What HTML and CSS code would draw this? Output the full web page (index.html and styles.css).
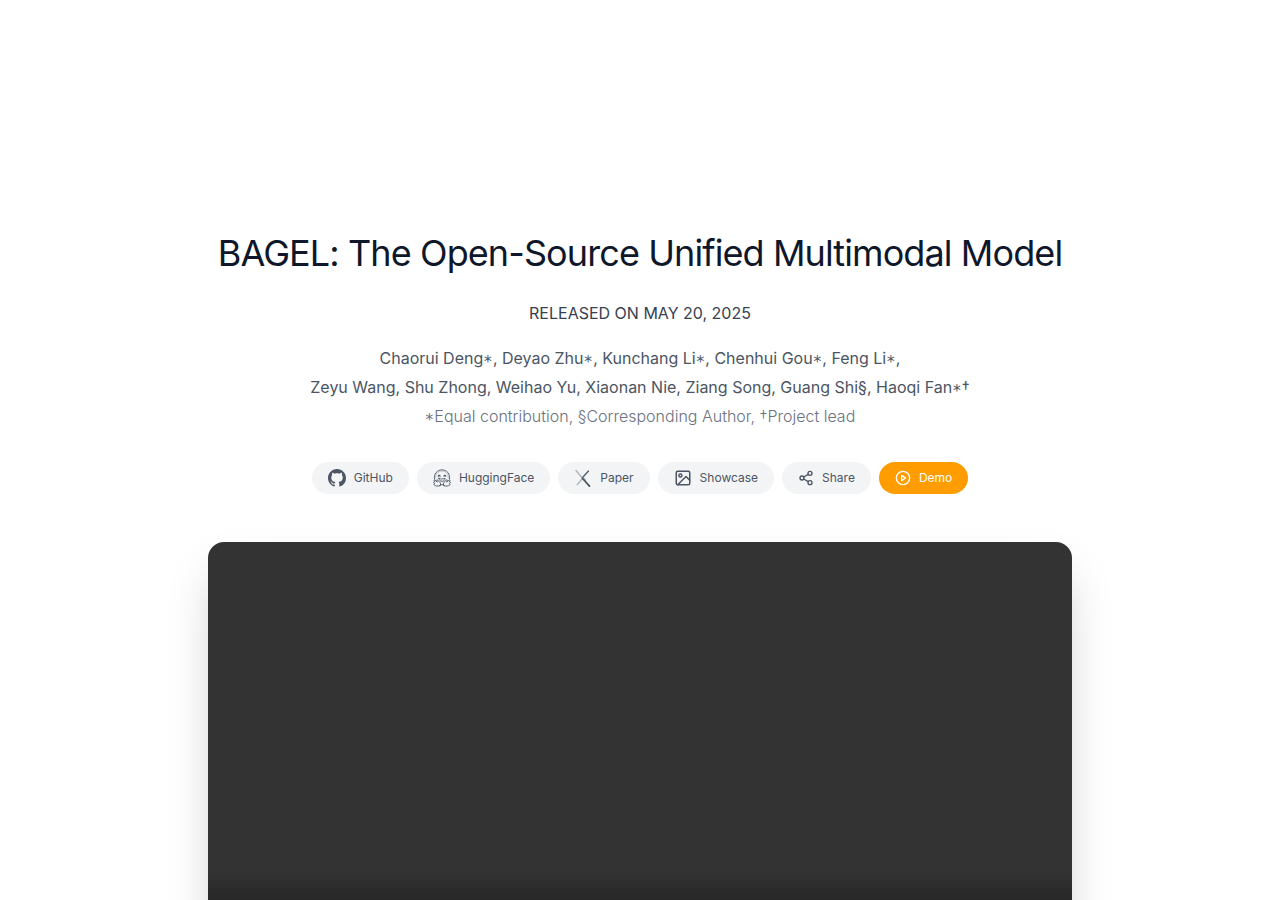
FILE: index.html
```html
<!DOCTYPE html>
<html lang="en">
<head>
    <meta charset="UTF-8">
    <meta name="viewport" content="width=device-width, initial-scale=1.0">
    <title>BAGEL: The Open-Source Unified Multimodal Model</title>
    <link rel="stylesheet" href="styles.css">
</head>
<body>
    <main class="hero">
        <h1>BAGEL: The Open-Source Unified Multimodal Model</h1>
        <p class="release">RELEASED ON MAY 20, 2025</p>

        <div class="authors">
            <p>Chaorui Deng∗, Deyao Zhu∗, Kunchang Li∗, Chenhui Gou∗, Feng Li∗,</p>
            <p>Zeyu Wang, Shu Zhong, Weihao Yu, Xiaonan Nie, Ziang Song, Guang Shi§, Haoqi Fan∗†</p>
            <p class="notes">∗Equal contribution, §Corresponding Author, †Project lead</p>
        </div>

        <nav class="links">
            <a class="pill" href="#github">
                <svg class="icon" viewBox="0 0 16 16" fill="currentColor" aria-hidden="true">
                    <path d="M8 0C3.58 0 0 3.58 0 8c0 3.54 2.29 6.53 5.47 7.59.4.07.55-.17.55-.38 0-.19-.01-.82-.01-1.49-2.01.37-2.53-.49-2.69-.94-.09-.23-.48-.94-.82-1.13-.28-.15-.68-.52-.01-.53.63-.01 1.08.58 1.23.82.72 1.21 1.87.87 2.33.66.07-.52.28-.87.51-1.07-1.78-.2-3.64-.89-3.64-3.95 0-.87.31-1.59.82-2.15-.08-.2-.36-1.02.08-2.12 0 0 .67-.21 2.2.82.64-.18 1.32-.27 2-.27s1.36.09 2 .27c1.53-1.04 2.2-.82 2.2-.82.44 1.1.16 1.92.08 2.12.51.56.82 1.27.82 2.15 0 3.07-1.87 3.75-3.65 3.95.29.25.54.73.54 1.48 0 1.07-.01 1.93-.01 2.2 0 .21.15.46.55.38A8.01 8.01 0 0 0 16 8c0-4.42-3.58-8-8-8z"/>
                </svg>
                GitHub
            </a>
            <a class="pill" href="#huggingface">
                <svg class="icon" viewBox="0 0 24 24" fill="none" stroke="currentColor" stroke-width="1.2" stroke-linecap="round" stroke-linejoin="round" aria-hidden="true">
                    <path d="M2 13.500C.8 6.500 5.500 1.200 12 1.200s11.200 5.300 10 12.300"/>
                    <path d="M3.600 12.500C3 6.800 6.800 2.900 12 2.900s9 3.900 8.400 9.600" stroke-width=".4"/>
                    <path d="M7 9.600c.5-1.500 2-1.500 2.500 0M14.500 9.600c.5-1.500 2-1.500 2.500 0" stroke-width="1.500"/>
                    <path d="M8 12.300c2.400 1.400 5.600 1.400 8 0-.2 2.800-1.900 4.200-4 4.200s-3.800-1.400-4-4.200z"/>
                    <path d="M9.300 22.200c1.500-1.700 1.100-3.300-.6-4.800l-2.400-2.700c-.8-.9-1.700-.2-1.400.7l.9 2-3.200-2.500c-1-.6-1.800.3-1.200 1.100l1 1.200c-1.200-.5-2 .5-1.300 1.300l1 1c-1 0-1.300.8-.7 1.500 2.100 1.900 5 2.400 7.900 1.200z"/>
                    <path d="M14.700 22.200c-1.500-1.700-1.100-3.300.6-4.800l2.400-2.700c.8-.9 1.700-.2 1.400.7l-.9 2 3.200-2.500c1-.6 1.800.3 1.200 1.100l-1 1.200c1.200-.5 2 .5 1.300 1.300l-1 1c1 0 1.300.8.700 1.500-2.100 1.900-5 2.400-7.900 1.200z"/>
                    <path d="M10 21h4"/>
                </svg>
                HuggingFace
            </a>
            <a class="pill" href="#paper">
                <svg class="icon" viewBox="0 0 18 18" fill="none" stroke="currentColor" stroke-linecap="round" aria-hidden="true">
                    <path class="faint" d="M2 1.500l5.900 6.900M7.900 10.300L3.200 15.800M10 9.500l1.500 1.700" stroke-width="1.500"/>
                    <path d="M14.500 2L8.600 8.500q-.5.600 0 1.300" stroke-width="1.200"/>
                    <path d="M8.600 9.500l6.900 7.700" stroke-width="1.800"/>
                </svg>
                Paper
            </a>
            <a class="pill" href="#showcase">
                <svg class="icon" viewBox="0 0 24 24" fill="none" stroke="currentColor" stroke-width="2" stroke-linecap="round" stroke-linejoin="round" aria-hidden="true">
                    <rect x="3" y="3" width="18" height="18" rx="2"/>
                    <circle cx="8.500" cy="8.500" r="2"/>
                    <path d="M21 15l-5-5L5 21"/>
                </svg>
                Showcase
            </a>
            <button class="pill" type="button">
                <svg class="icon small" viewBox="0 0 24 24" fill="none" stroke="currentColor" stroke-width="2" stroke-linecap="round" stroke-linejoin="round" aria-hidden="true">
                    <circle cx="18" cy="5" r="3"/>
                    <circle cx="6" cy="12" r="3"/>
                    <circle cx="18" cy="19" r="3"/>
                    <path d="M8.590 13.510l6.830 3.980M15.410 6.510l-6.820 3.980"/>
                </svg>
                Share
            </button>
            <a class="pill demo" href="#demo">
                <svg class="icon small" viewBox="0 0 24 24" fill="none" stroke="currentColor" stroke-width="2" stroke-linecap="round" stroke-linejoin="round" aria-hidden="true">
                    <circle cx="12" cy="12" r="10"/>
                    <path d="M10 8l6 4-6 4V8z"/>
                </svg>
                Demo
            </a>
        </nav>

        <video class="video" aria-label="BAGEL introduction"></video>
    </main>
</body>
</html>
```

FILE: styles.css
```css
:root {
    --title: #0f172a;
    --text: #4b5563;
    --muted: #6b7280;
    --pill-bg: #f3f4f6;
    --accent: #ff9d00;
}

* {
    box-sizing: border-box;
}

body {
    margin: 0;
    font-family: Inter, "DejaVu Sans Mono", sans-serif;
    font-size: 16px;
    background-color: #fff;
    color: var(--text);
}

.hero {
    max-width: 896px;
    margin: 0 auto;
    padding: 231px 16px 96px;
    display: flex;
    flex-direction: column;
    align-items: center;
    text-align: center;
}

h1 {
    margin: 0 0 25px;
    font-size: 36px;
    line-height: 45px;
    font-weight: 400;
    letter-spacing: -0.025em;
    color: var(--title);
}

p {
    margin: 0;
}

.release {
    margin-bottom: 19px;
    line-height: 24px;
    color: #374151;
}

.authors {
    margin-bottom: 31px;
    line-height: 29px;
}

.notes {
    font-weight: 300;
    color: var(--muted);
}

.links {
    display: flex;
    flex-wrap: wrap;
    justify-content: center;
    gap: 8px;
    margin-bottom: 48px;
}

.pill {
    display: inline-flex;
    align-items: center;
    gap: 8px;
    height: 32px;
    padding: 0 16px;
    border: none;
    border-radius: 16px;
    background-color: var(--pill-bg);
    color: var(--text);
    font-family: inherit;
    font-size: 12px;
    line-height: 16px;
    font-weight: 400;
    text-decoration: none;
    cursor: pointer;
}

.pill:hover {
    background-color: #e5e7eb;
}

.pill.demo {
    background-color: var(--accent);
    color: #fff;
}

.icon {
    width: 18px;
    height: 18px;
}

.icon.small {
    width: 16px;
    height: 16px;
}

.faint {
    stroke: #b4b8bf;
}

.video {
    display: block;
    width: 100%;
    aspect-ratio: 16 / 9;
    border-radius: 16px;
    background: linear-gradient(#333 68%, #262626 74%, #1a1a1a);
    box-shadow: 0 25px 50px -12px rgba(0, 0, 0, 0.25);
}
```
